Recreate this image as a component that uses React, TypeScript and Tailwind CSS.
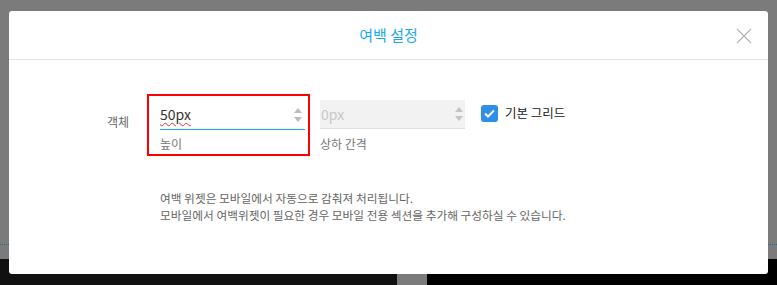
import React from "react";

function Spinner({ light }: { light?: boolean }) {
  const c = light ? "#c4c4c4" : "#bdbdbd";
  return (
    <svg width="10" height="20" viewBox="0 0 10 20" className="shrink-0">
      <path d="M1 8 L5 3 L9 8 Z" fill={c} />
      <path d="M1 12 L5 17 L9 12 Z" fill={c} />
    </svg>
  );
}

export default function App() {
  const font = { fontFamily: '"Noto Sans CJK KR", "Noto Sans", sans-serif' };
  return (
    <div className="relative h-[285px] w-[777px] overflow-hidden bg-[#7b7b7b]" style={font}>
      {/* page behind the overlay */}
      <div className="absolute left-0 top-[259px] flex h-[26px] w-full">
        <div className="w-[397px] bg-[#111]" />
        <div className="w-[30px] bg-[#7b7b7b]" />
        <div className="flex-1 bg-black" />
      </div>
      <div className="absolute left-0 top-[244px] w-full border-t border-dotted border-[#1b6f95]" />

      {/* modal */}
      <div className="absolute left-[9px] top-[11px] h-[263px] w-[759px] rounded-[3px] bg-white">
        <div className="relative flex h-[49px] items-center justify-center border-b border-[#e3e3e3]">
          <span className="text-[15px] text-[#1aa9f0]">여백 설정</span>
          <svg
            width="16"
            height="16"
            viewBox="0 0 16 16"
            className="absolute right-[16px] top-[17px]"
          >
            <path d="M1 1 L15 15 M15 1 L1 15" stroke="#b5b5b5" strokeWidth="1.2" />
          </svg>
        </div>

        <div className="flex items-start pl-[98px] pt-[34px]">
          <span className="mt-[19px] w-[40px] text-[12px] text-[#666]">객체</span>

          <div className="h-[62px] w-[163px] border-2 border-[#f00] pl-[11px] pr-[3px] pt-[4px]">
            <div className="flex h-[30px] items-center justify-between border-b border-[#17a8f0] pr-[2px]">
              <span
                className="text-[14px] text-[#333] underline decoration-wavy decoration-[#e33] decoration-1 underline-offset-2"
              >
                50px
              </span>
              <Spinner />
            </div>
            <div className="mt-[5px] text-[12px] text-[#777]">높이</div>
          </div>

          <div className="ml-[10px] mt-[6px] w-[145px]">
            <div className="flex h-[29px] items-center justify-between border-b border-[#e0e0e0] bg-[#f2f2f2] pl-[1px] pr-[1px]">
              <span className="text-[14px] text-[#c8c8c8]">0px</span>
              <Spinner light />
            </div>
            <div className="mt-[6px] text-[12px] text-[#777]">상하 간격</div>
          </div>

          <div className="ml-[16px] mt-[10px] flex items-center gap-[7px]">
            <span className="flex h-[17px] w-[17px] items-center justify-center rounded-[3px] bg-[#2d8fe6]">
              <svg width="11" height="9" viewBox="0 0 11 9">
                <path d="M1 4.5 L4 7.5 L10 1.5" stroke="white" strokeWidth="2" fill="none" />
              </svg>
            </span>
            <span className="text-[12.5px] text-[#222]">기본 그리드</span>
          </div>
        </div>

        <div className="pl-[151px] pt-[33px] text-[11.7px] leading-[17px] text-[#666]">
          <p>여백 위젯은 모바일에서 자동으로 감춰져 처리됩니다.</p>
          <p>모바일에서 여백위젯이 필요한 경우 모바일 전용 섹션을 추가해 구성하실 수 있습니다.</p>
        </div>
      </div>
    </div>
  );
}
